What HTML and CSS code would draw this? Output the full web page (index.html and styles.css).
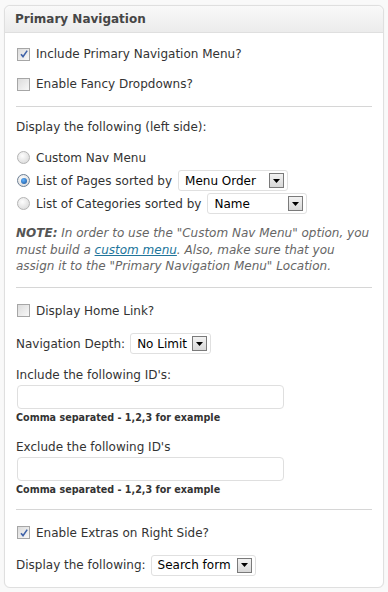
FILE: index.html
```html
<!DOCTYPE html>
<html lang="en">

<head>
    <meta charset="UTF-8">
    <meta name="viewport" content="width=device-width, initial-scale=1.0">
    <title>Primary Navigation</title>
    <link rel="stylesheet" href="styles.css">
</head>

<body>
    <div class="panel">
        <h3 class="panel-title">Primary Navigation</h3>
        <div class="panel-body">
            <div class="row check-row first">
                <span class="check checked"><svg viewBox="0 0 10 10" width="10" height="10"><path d="M2 5.2 L4 7.6 L8.2 1.6" fill="none" stroke="#3f62a8" stroke-width="1.6"/></svg></span>
                <span>Include Primary Navigation Menu?</span>
            </div>
            <div class="row check-row">
                <span class="check"></span>
                <span>Enable Fancy Dropdowns?</span>
            </div>

            <hr class="sep">

            <div class="row">Display the following (left side):</div>
            <div class="radios">
                <div class="radio-row">
                    <span class="radio"></span>
                    <span>Custom Nav Menu</span>
                </div>
                <div class="radio-row">
                    <span class="radio checked"><span class="dot"></span></span>
                    <span>List of Pages sorted by</span>
                    <span class="select sel-pages"><span class="sel-text">Menu Order</span><span class="arrow"><svg viewBox="0 0 7 4" width="7" height="4"><path d="M0 0 H7 L3.5 4 Z" fill="#000"/></svg></span></span>
                </div>
                <div class="radio-row">
                    <span class="radio"></span>
                    <span>List of Categories sorted by</span>
                    <span class="select sel-cats"><span class="sel-text">Name</span><span class="arrow"><svg viewBox="0 0 7 4" width="7" height="4"><path d="M0 0 H7 L3.5 4 Z" fill="#000"/></svg></span></span>
                </div>
            </div>

            <p class="note"><b>NOTE:</b> In order to use the "Custom Nav Menu" option, you must build a <a href="#">custom menu</a>. Also, make sure that you assign it to the "Primary Navigation Menu" Location.</p>

            <hr class="sep">

            <div class="row check-row">
                <span class="check"></span>
                <span>Display Home Link?</span>
            </div>
            <div class="row select-row">
                <span>Navigation Depth:</span>
                <span class="select sel-depth"><span class="sel-text">No Limit</span><span class="arrow"><svg viewBox="0 0 7 4" width="7" height="4"><path d="M0 0 H7 L3.5 4 Z" fill="#000"/></svg></span></span>
            </div>

            <div class="row field-label">Include the following ID's:</div>
            <input class="text-input" type="text">
            <div class="hint">Comma separated - 1,2,3 for example</div>

            <div class="row field-label">Exclude the following ID's</div>
            <input class="text-input" type="text">
            <div class="hint">Comma separated - 1,2,3 for example</div>

            <hr class="sep">

            <div class="row check-row">
                <span class="check checked"><svg viewBox="0 0 10 10" width="10" height="10"><path d="M2 5.2 L4 7.6 L8.2 1.6" fill="none" stroke="#3f62a8" stroke-width="1.6"/></svg></span>
                <span>Enable Extras on Right Side?</span>
            </div>
            <div class="row select-row last">
                <span>Display the following:</span>
                <span class="select sel-extras"><span class="sel-text">Search form</span><span class="arrow"><svg viewBox="0 0 7 4" width="7" height="4"><path d="M0 0 H7 L3.5 4 Z" fill="#000"/></svg></span></span>
            </div>
        </div>
    </div>
</body>

</html>
```

FILE: styles.css
```css
body {
    margin: 0;
    padding: 5px 4px 0 4px;
    background-color: #f9f9f9;
    font-family: "DejaVu Sans", Verdana, sans-serif;
    font-size: 12px;
    color: #333;
}

.panel {
    background-color: #fff;
    border: 1px solid #dfdfdf;
    border-radius: 6px;
    box-shadow: 0 0 1px #e8e8e8;
}

.panel-title {
    margin: 0;
    height: 26px;
    line-height: 27px;
    padding: 0 10px;
    font-size: 12px;
    font-weight: bold;
    color: #464646;
    background: linear-gradient(to bottom, #f9f9f9, #ececec);
    border-bottom: 1px solid #dfdfdf;
    border-radius: 6px 6px 0 0;
}

.panel-body {
    padding: 11px;
}

.row {
    height: 20px;
    line-height: 20px;
    margin-top: 10px;
    display: flex;
    align-items: center;
}

.row.first {
    margin-top: 0;
}

.check-row {
    gap: 6px;
}

.check {
    width: 11px;
    height: 11px;
    border: 1px solid #a6a6a6;
    background: linear-gradient(135deg, #dcdcdc, #f8f8f8);
    display: flex;
    align-items: center;
    justify-content: center;
    margin-left: 1px;
}

.sep {
    border: 0;
    border-top: 1px solid #d6d6d6;
    margin: 12px 0 10px 0;
}

.sep + .row {
    margin-top: 0;
}

/* margins collapse with the hr, so this wins over its 10px */
.sep + .check-row {
    margin-top: 13px;
}

.radios {
    margin-top: 9px;
}

.radio-row {
    height: 23px;
    display: flex;
    align-items: center;
    gap: 6px;
}

.radio {
    width: 11px;
    height: 11px;
    margin-left: 1px;
    border: 1px solid #b4b4b4;
    border-radius: 50%;
    background: radial-gradient(circle at 40% 35%, #fdfdfd, #d4d4d4);
    display: flex;
    align-items: center;
    justify-content: center;
}

.radio.checked {
    border-color: #6c7f95;
}

.dot {
    width: 6px;
    height: 6px;
    border-radius: 50%;
    background: radial-gradient(circle at 40% 35%, #5fb2ff, #1a4f92);
}

.select {
    height: 19px;
    border: 1px solid #e0e0e0;
    border-radius: 3px;
    background-color: #fff;
    display: flex;
    align-items: center;
    justify-content: space-between;
    padding: 0 3px 0 6px;
    color: #000;
}

.sel-pages {
    width: 99px;
}

.sel-cats {
    width: 89px;
}

.sel-depth {
    width: 70px;
}

.sel-extras {
    width: 94px;
}

.arrow {
    width: 13px;
    height: 13px;
    border: 1px solid #7a7a7a;
    background: linear-gradient(to bottom, #f2f2f2, #d8d8d8);
    display: flex;
    align-items: center;
    justify-content: center;
}

.note {
    margin: 10px 0 0 0;
    line-height: 16.5px;
    font-style: italic;
    color: #666;
}

.note b {
    color: #555;
}

.note a {
    color: #21759b;
}

.select-row {
    height: 22px;
    margin-top: 12px;
    gap: 5px;
}

.select-row.last {
    height: 21px;
}

.text-input {
    display: block;
    box-sizing: border-box;
    width: 267px;
    height: 24px;
    margin: 0 0 0 1px;
    border: 1px solid #dfdfdf;
    border-radius: 4px;
    background: #fff;
}

.hint {
    margin-top: 2px;
    height: 14px;
    line-height: 14px;
    font-size: 9.6px;
    font-weight: bold;
    color: #333;
}

.row.field-label {
    margin-top: 12px;
}

.select-row + .field-label {
    margin-top: 10px;
}
```
